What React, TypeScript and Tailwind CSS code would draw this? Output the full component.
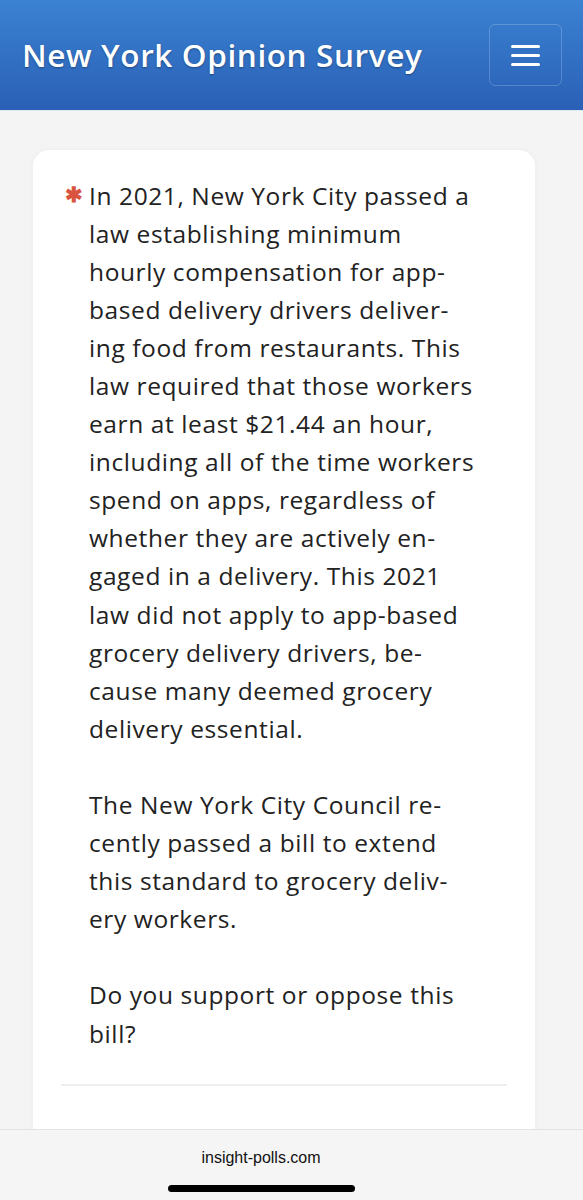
const paragraphs: string[][] = [
  [
    "In 2021, New York City passed a",
    "law establishing minimum",
    "hourly compensation for app-",
    "based delivery drivers deliver-",
    "ing food from restaurants. This",
    "law required that those workers",
    "earn at least $21.44 an hour,",
    "including all of the time workers",
    "spend on apps, regardless of",
    "whether they are actively en-",
    "gaged in a delivery. This 2021",
    "law did not apply to app-based",
    "grocery delivery drivers, be-",
    "cause many deemed grocery",
    "delivery essential.",
  ],
  [
    "The New York City Council re-",
    "cently passed a bill to extend",
    "this standard to grocery deliv-",
    "ery workers.",
  ],
  ["Do you support or oppose this", "bill?"],
];

const App = () => {
  return (
    <div className="h-[1200px] flex flex-col bg-[#f4f4f4] overflow-hidden">
      <header className="h-[111px] shrink-0 flex items-center justify-between pl-[22px] pr-[21px] bg-gradient-to-b from-[#3b82d2] to-[#2a60b6] border-b border-[#dfe6ee]">
        <h1
          className="text-white text-[31.5px] font-semibold tracking-[0.6px] [text-shadow:0_1px_2px_rgba(0,0,0,0.35)]"
          style={{ fontFamily: '"Open Sans", "Noto Sans", sans-serif' }}
        >
          New York Opinion Survey
        </h1>
        <button className="w-[73px] h-[62px] rounded-[6px] border border-white/20 flex flex-col items-center justify-center gap-[6px]">
          <span className="block w-[29px] h-[3px] rounded-full bg-white" />
          <span className="block w-[29px] h-[3px] rounded-full bg-white" />
          <span className="block w-[29px] h-[3px] rounded-full bg-white" />
        </button>
      </header>

      <main className="flex-1 overflow-hidden pt-[39px] pl-[33px] pr-[48px]">
        <div className="bg-white rounded-t-[16px] shadow-[0_0_6px_rgba(0,0,0,0.04)] pt-[26.5px] px-[28px] pb-[60px]">
          <div
            className="flex text-[#222] text-[24.5px] leading-[38.1px] tracking-[0.6px]"
            style={{ fontFamily: '"Open Sans", "Noto Sans", sans-serif' }}
          >
            <div className="w-[28px] shrink-0 text-[#d9543f] pl-[4px] -mt-[2px] text-[21px] font-bold">
              ✱
            </div>
            <div className="flex flex-col gap-[38.1px]">
              {paragraphs.map((lines, i) => (
                <p key={i}>
                  {lines.map((line, j) => (
                    <span key={j} className="block whitespace-nowrap">
                      {line}
                    </span>
                  ))}
                </p>
              ))}
            </div>
          </div>
          <div className="mt-[31px] h-[2px] bg-[#eeeeee]" />
        </div>
      </main>

      <footer className="h-[71px] shrink-0 bg-[#f5f5f5] border-t border-[#e2e2e2] flex flex-col items-center pr-[61px]">
        <span
          className="mt-[16px] text-[16px] text-[#111]"
          style={{ fontFamily: '"Liberation Sans", Arial, sans-serif' }}
        >
          insight-polls.com
        </span>
        <span className="mt-[15px] w-[187px] h-[7px] rounded-full bg-black" />
      </footer>
    </div>
  );
};

export default App;
